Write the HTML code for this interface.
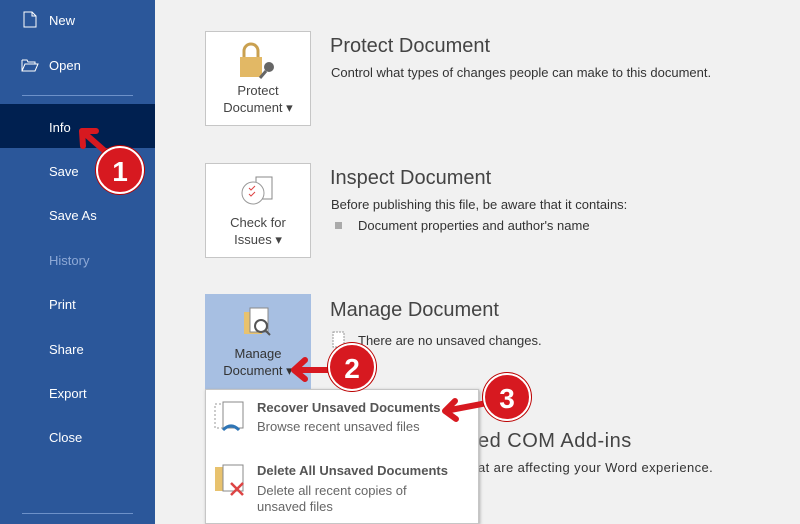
<!DOCTYPE html><html><head><style>
body{margin:0;width:800px;height:524px;overflow:hidden;background:#f1f1f1;font-family:"Liberation Sans",sans-serif;position:relative}
.sb{position:absolute;left:0;top:0;width:155px;height:524px;background:#2b579a}
.it{position:absolute;left:49px;color:#fff;font-size:13px}
.box{position:absolute;left:205px;width:106px;height:95px;border:1px solid #c6c6c6;background:#fff;text-align:center;font-size:13px;color:#444;box-sizing:border-box}
.h{position:absolute;left:330px;font-size:20px;color:#444}
.t{position:absolute;font-size:13px;color:#333}
.c{position:absolute;width:48px;height:48px;border-radius:50%;background:#d71920;border:2px solid #fff;box-shadow:0 0 0 1px #b00;color:#fff;font-weight:bold;font-size:28px;text-align:center;line-height:48px;box-sizing:border-box}
</style></head><body>
<div class="sb">
<svg style="position:absolute;left:23px;top:11px" width="14" height="17"><path d="M1 1h8l4 4v11H1z M9 1v4h4" fill="none" stroke="#fff"/></svg>
<div class="it" style="top:13px">New</div>
<svg style="position:absolute;left:21px;top:58px" width="18" height="14"><path d="M1 2h5l1 2h7v2M1 2v11h13l3-7H4L1 13" fill="none" stroke="#fff"/></svg>
<div class="it" style="top:58px">Open</div>
<div style="position:absolute;left:22px;top:95px;width:111px;height:1px;background:#6d91c9"></div>
<div style="position:absolute;left:0;top:104px;width:155px;height:44px;background:#002050"></div>
<div class="it" style="top:120px">Info</div>
<div class="it" style="top:164px">Save</div>
<div class="it" style="top:208px">Save As</div>
<div class="it" style="top:253px;color:#8ea9d6">History</div>
<div class="it" style="top:297px">Print</div>
<div class="it" style="top:342px">Share</div>
<div class="it" style="top:386px">Export</div>
<div class="it" style="top:430px">Close</div>
<div style="position:absolute;left:22px;top:513px;width:111px;height:1px;background:#6d91c9"></div>
</div>
<div class="box" style="top:31px"><svg width="44" height="40" style="margin-top:9px"><rect x="4" y="16" width="22" height="20" fill="#e2b865"/><path d="M8 16v-6a7 7 0 0 1 14 0v6" fill="none" stroke="#c9a050" stroke-width="3"/><circle cx="33" cy="26" r="5" fill="#666"/><path d="M30 30l-6 7" stroke="#666" stroke-width="3"/></svg><div style="line-height:17px;margin-top:-2px">Protect<br>Document ▾</div></div>
<div class="box" style="top:163px"><svg width="44" height="40" style="margin-top:9px"><rect x="20" y="4" width="16" height="22" fill="#fff" stroke="#888"/><circle cx="17" cy="20" r="11" fill="#fff" stroke="#999"/><path d="M13 15l2 2 4-4M13 21l2 2 4-4" stroke="#d44" fill="none"/></svg><div style="line-height:17px;margin-top:-2px">Check for<br>Issues ▾</div></div>
<div class="box" style="top:294px;background:#a7bfe2;border-color:#a7bfe2;color:#333"><svg width="44" height="40" style="margin-top:9px"><rect x="8" y="8" width="18" height="22" fill="#e8c26e"/><rect x="14" y="4" width="18" height="24" fill="#fff" stroke="#888"/><circle cx="25" cy="22" r="6" fill="#fff" stroke="#555" stroke-width="2"/><path d="M29 26l5 5" stroke="#555" stroke-width="2"/></svg><div style="line-height:17px;margin-top:-2px">Manage<br>Document ▾</div></div>
<div class="h" style="top:35px">Protect Document</div>
<div class="t" style="left:331px;top:65px">Control what types of changes people can make to this document.</div>
<div class="h" style="top:167px">Inspect Document</div>
<div class="t" style="left:331px;top:197px">Before publishing this file, be aware that it contains:</div>
<div style="position:absolute;left:335px;top:222px;width:7px;height:7px;background:#aaa"></div>
<div class="t" style="left:358px;top:218px">Document properties and author's name</div>
<div class="h" style="top:299px">Manage Document</div>
<svg style="position:absolute;left:332px;top:331px" width="16" height="18"><rect x="1" y="1" width="11" height="15" fill="#fff" stroke="#999" stroke-dasharray="2 1"/></svg>
<div class="t" style="left:358px;top:333px">There are no unsaved changes.</div>
<div class="h" style="top:430px;left:478px;letter-spacing:0.5px">ed COM Add-ins</div>
<div class="t" style="left:478px;top:460px;letter-spacing:0.4px">at are affecting your Word experience.</div>
<div style="position:absolute;left:205px;top:389px;width:272px;height:133px;background:#fff;border:1px solid #c6c6c6;box-shadow:1px 1px 3px #aaa"></div>
<svg style="position:absolute;left:213px;top:400px" width="36" height="36"><rect x="2" y="4" width="18" height="24" fill="none" stroke="#999" stroke-dasharray="2 2"/><rect x="10" y="2" width="20" height="26" fill="#fff" stroke="#888"/><path d="M10 30q8-8 16 0" fill="none" stroke="#2e75b6" stroke-width="3"/></svg>
<div class="t" style="left:257px;top:400px;font-weight:bold;color:#555">Recover Unsaved Documents</div>
<div class="t" style="left:257px;top:419px;color:#666">Browse recent unsaved files</div>
<svg style="position:absolute;left:213px;top:463px" width="36" height="36"><rect x="2" y="4" width="18" height="24" fill="#e8c26e"/><rect x="10" y="2" width="20" height="26" fill="#fff" stroke="#888"/><path d="M18 20l12 12M30 20L18 32" stroke="#d44" stroke-width="2.5"/></svg>
<div class="t" style="left:257px;top:463px;font-weight:bold;color:#555">Delete All Unsaved Documents</div>
<div class="t" style="left:257px;top:483px;color:#666;line-height:16px">Delete all recent copies of<br>unsaved files</div>
<svg style="position:absolute;left:0;top:0" width="800" height="524"><g stroke="#d71920" stroke-width="6" fill="none" stroke-linecap="round" stroke-linejoin="round"><path d="M115 160L82 131M82 131l1 15M82 131l14 0"/><path d="M332 370H294M294 370l11-10M294 370l11 9"/><path d="M487 403l-42 8M445 411l10-10M445 411l11 8"/></g></svg>
<div class="c" style="left:96px;top:146px">1</div>
<div class="c" style="left:328px;top:343px">2</div>
<div class="c" style="left:483px;top:373px">3</div>
</body></html>
